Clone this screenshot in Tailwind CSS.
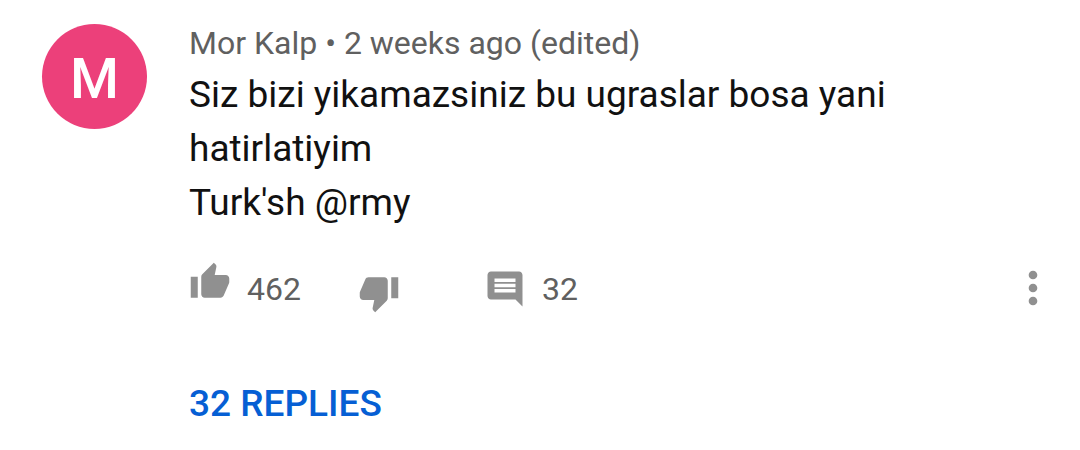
<!DOCTYPE html>
<html lang="tr">
<head>
    <meta charset="utf-8">
    <meta name="viewport" content="width=device-width, initial-scale=1">
    <title>Comments</title>
    <script src="https://cdn.jsdelivr.net/npm/@tailwindcss/browser@4"></script>
</head>
<body class="bg-white font-[Roboto,sans-serif]">
    <article class="flex gap-[42px] pt-6 pl-[42px] pr-[21px]">

        <!-- Avatar -->
        <div class="flex size-[105px] shrink-0 items-center justify-center rounded-full bg-[#ec407a] pt-1 text-[56px] font-medium text-white">M</div>

        <div class="min-w-0 flex-1">
            <header class="text-[32px] leading-[38px] text-[#606060]">Mor Kalp • 2 weeks ago (edited)</header>
            <p class="pr-24 pt-1.5 text-[37px] leading-[54px] text-[#111111]">Siz bizi yikamazsiniz bu ugraslar bosa yani hatirlatiyim<br>Turk'sh @rmy</p>

            <!-- Actions -->
            <div class="mt-7 flex h-[62px] items-center text-[32px] text-[#606060]">
                <button type="button" class="flex items-center gap-4" aria-label="Like, 462">
                    <svg class="mb-3.5 size-[42px] text-[#909090]" viewBox="0 0 24 24" fill="currentColor"><path d="M1 21h4V9H1v12zm22-11c0-1.100-.9-2-2-2h-6.310l.95-4.570.03-.32c0-.41-.17-.79-.44-1.060L14.170 1 7.590 7.590C7.220 7.950 7 8.450 7 9v10c0 1.100.9 2 2 2h9c.83 0 1.540-.5 1.840-1.220l3.020-7.050c.09-.23.14-.47.14-.73v-2z"/></svg>
                    <span>462</span>
                </button>
                <button type="button" class="ml-[57px]" aria-label="Dislike">
                    <svg class="mt-2 size-[42px] text-[#909090]" viewBox="0 0 24 24" fill="currentColor"><path d="M15 3H6c-.83 0-1.540.5-1.840 1.220l-3.020 7.050c-.09.23-.14.47-.14.73v2c0 1.100.9 2 2 2h6.310l-.95 4.570-.03.32c0 .41.17.79.44 1.060L9.830 23l6.590-6.590c.36-.36.58-.86.58-1.410V5c0-1.100-.9-2-2-2zm4 0v12h4V3h-4z"/></svg>
                </button>
                <button type="button" class="ml-[84px] flex items-center gap-4" aria-label="Comments, 32">
                    <svg class="size-[42px] text-[#909090]" viewBox="0 0 24 24" fill="currentColor"><path d="M21.990 4c0-1.100-.89-2-1.990-2H4c-1.100 0-2 .9-2 2v12c0 1.100.9 2 2 2h14l4 4-.01-18zM18 14H6v-2h12v2zm0-3H6V9h12v2zm0-3H6V6h12v2z"/></svg>
                    <span>32</span>
                </button>
                <button type="button" class="ml-auto pb-0.5" aria-label="More options">
                    <svg class="size-[52px] text-[#909090]" viewBox="0 0 24 24" fill="currentColor"><path d="M12 8c1.100 0 2-.9 2-2s-.9-2-2-2-2 .9-2 2 .9 2 2 2zm0 2c-1.100 0-2 .9-2 2s.9 2 2 2 2-.9 2-2-.9-2-2-2zm0 6c-1.100 0-2 .9-2 2s.9 2 2 2 2-.9 2-2-.9-2-2-2z"/></svg>
                </button>
            </div>

            <button type="button" class="mt-14 text-[37px] leading-[56px] font-medium text-[#065fd4]">32 REPLIES</button>
        </div>
    </article>
</body>
</html>
